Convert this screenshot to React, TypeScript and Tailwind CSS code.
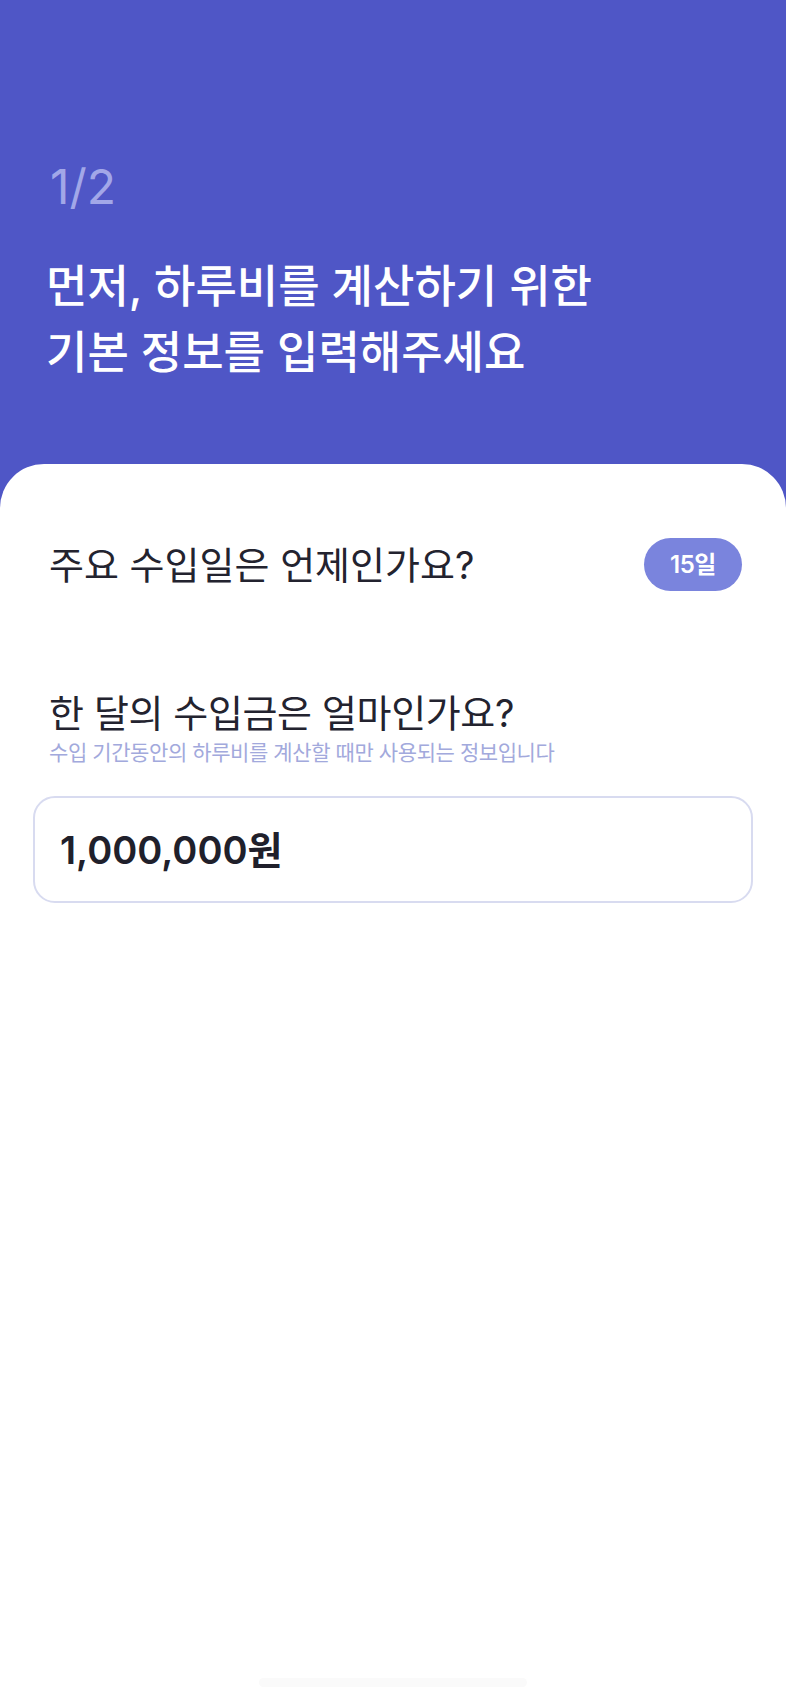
export default function App() {
  return (
    <div className="min-h-screen flex flex-col bg-[#4f56c6] font-['Inter','Noto_Sans_CJK_KR',sans-serif]">
      <header className="pt-[158px] pb-[79px] px-[46px]">
        <p className="pl-[4px] text-[48px] leading-[58px] text-[#a2a7e8]">1/2</p>
        <h1 className="mt-[38px] text-[45px] leading-[65.5px] font-medium text-white">
          먼저, 하루비를 계산하기 위한
          <br />
          기본 정보를 입력해주세요
        </h1>
      </header>

      <main className="flex-1 flex flex-col bg-white rounded-t-[44px] px-[33px] pt-[74px]">
        <section className="flex items-center justify-between pl-[16px] pr-[11px]">
          <h2 className="text-[38px] leading-[46px] text-[#23232f]">
            주요 수입일은 언제인가요?
          </h2>
          <button className="h-[53px] w-[98px] rounded-full bg-[#7a84dd] text-white text-[24px] font-semibold tracking-[-0.02em]">
            15일
          </button>
        </section>

        <section className="mt-[99px] pl-[16px]">
          <h2 className="text-[38px] leading-[46px] text-[#23232f] tracking-[-0.01em]">
            한 달의 수입금은 얼마인가요?
          </h2>
          <p className="mt-[4px] text-[21px] leading-[26px] text-[#a2a9dc] tracking-[-0.02em]">
            수입 기간동안의 하루비를 계산할 때만 사용되는 정보입니다
          </p>
        </section>

        <div className="mt-[30px] h-[107px] flex items-center rounded-[22px] border-2 border-[#d8dbf0] pl-[25px] pr-[20px]">
          <input
            readOnly
            value="1,000,000원"
            className="w-full bg-transparent outline-none text-[38px] leading-[44px] font-semibold text-[#20202b]"
          />
        </div>

        <div className="flex-1" />
        <div className="mx-auto mb-[17px] h-[9px] w-[268px] rounded-full bg-[#fafafa]" />
      </main>
    </div>
  );
}
